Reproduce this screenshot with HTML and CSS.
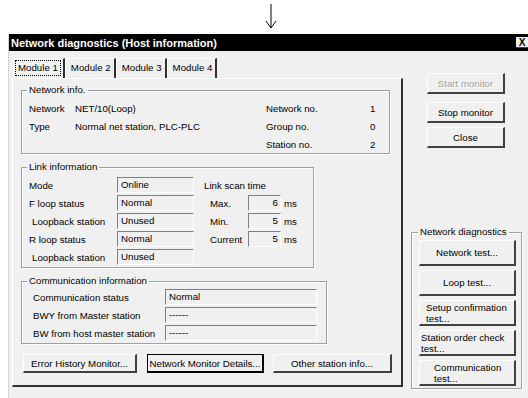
FILE: index.html
```html
<!DOCTYPE html>
<html lang="en">
<head>
  <meta charset="UTF-8">
  <title>Network diagnostics (Host information)</title>
  <link rel="stylesheet" href="styles.css">
</head>
<body>

  <div class="arrow">
    <svg width="14" height="30" viewBox="0 0 14 30">
      <path d="M7 4 V28 M2 21 L7 28 L12 21" fill="none" stroke="#000" stroke-width="1"/>
    </svg>
  </div>

  <div class="window">
    <div class="titlebar">
      <span>Network diagnostics (Host information)</span>
      <span class="close">X</span>
    </div>

    <div class="content">
      <div class="left">
        <div class="tabs">
          <div class="tab active"><span class="focus">Module 1</span></div>
          <div class="tab">Module 2</div>
          <div class="tab">Module 3</div>
          <div class="tab">Module 4</div>
        </div>

        <div class="panel">
          <fieldset class="group net-info">
            <legend>Network info.</legend>
            <div class="net-grid">
              <span>Network</span><span>NET/10(Loop)</span><span>Network no.</span><span class="num">1</span>
              <span>Type</span><span>Normal net station, PLC-PLC</span><span>Group no.</span><span class="num">0</span>
              <span></span><span></span><span>Station no.</span><span class="num">2</span>
            </div>
          </fieldset>

          <fieldset class="group link-info">
            <legend>Link information</legend>
            <div class="link-grid">
              <span>Mode</span><span class="box">Online</span><span class="scan">Link scan time</span>
              <span>F loop status</span><span class="box">Normal</span><span class="sub">Max.</span><span class="box num">6</span><span class="unit">ms</span>
              <span class="indent">Loopback station</span><span class="box">Unused</span><span class="sub">Min.</span><span class="box num">5</span><span class="unit">ms</span>
              <span>R loop status</span><span class="box">Normal</span><span class="sub">Current</span><span class="box num">5</span><span class="unit">ms</span>
              <span class="indent">Loopback station</span><span class="box">Unused</span>
            </div>
          </fieldset>

          <fieldset class="group comm-info">
            <legend>Communication information</legend>
            <div class="comm-grid">
              <span>Communication status</span><span class="box">Normal</span>
              <span>BWY from Master station</span><span class="box">------</span>
              <span>BW from host master station</span><span class="box">------</span>
            </div>
          </fieldset>

          <div class="bottom-buttons">
            <button class="btn btn-error">Error History Monitor...</button>
            <button class="btn btn-details default">Network Monitor Details...</button>
            <button class="btn btn-other">Other station info...</button>
          </div>
        </div>
      </div>

      <div class="right">
        <button class="btn side disabled">Start monitor</button>
        <button class="btn side stop">Stop monitor</button>
        <button class="btn side close-btn">Close</button>

        <fieldset class="group diag">
          <legend>Network diagnostics</legend>
          <button class="btn diag-btn">Network test...</button>
          <button class="btn diag-btn">Loop test...</button>
          <button class="btn diag-btn two-line setup">Setup confirmation<br>test...</button>
          <button class="btn diag-btn two-line order">Station order check<br>test...</button>
          <button class="btn diag-btn two-line comm">Communication<br>test...</button>
        </fieldset>
      </div>
    </div>
  </div>

</body>
</html>
```

FILE: styles.css
```css
* {
  box-sizing: border-box;
}
body {
  margin: 0;
  background-color: #fff;
  font-family: "Liberation Sans", Arial, sans-serif;
  font-size: 9.7px;
  color: #000;
  overflow: hidden;
}
.arrow {
  height: 34px;
  padding-left: 264px;
}
.arrow svg {
  display: block;
}
.window {
  margin-left: 8px;
  width: 528px;
  height: 364px;
  background-color: #f0f0f0;
  border-left: 1px solid #d4d4d4;
}
.titlebar {
  height: 17px;
  background-color: #000;
  color: #fff;
  font-weight: bold;
  font-size: 11px;
  display: flex;
  align-items: center;
  justify-content: space-between;
  padding-left: 2px;
}
.close {
  width: 13px;
  height: 11px;
  margin-right: 7px;
  background-color: #f0f0f0;
  color: #000;
  font-size: 10px;
  line-height: 11px;
  text-align: center;
  border-right: 1px solid #404040;
  border-bottom: 1px solid #404040;
}
.content {
  display: flex;
  padding-top: 7px;
}
.left {
  margin-left: 3px;
  width: 391px;
}
.tabs {
  display: flex;
  height: 20px;
  padding-left: 1px;
}
.tab {
  padding: 3px 3px 0 5px;
  border-top: 1px solid #fff;
  border-left: 1px solid #fff;
  border-right: 2px solid #303030;
  white-space: nowrap;
}
.tab.active {
  padding: 1px 2px 0 1px;
}
.focus {
  display: inline-block;
  padding: 1px 2px 2px 2px;
  border: 1px dotted #000;
}
.panel {
  border-left: 1px solid #fff;
  border-top: 1px solid #fff;
  border-right: 2px solid #303030;
  border-bottom: 2px solid #303030;
  padding: 5px 0 12px 8px;
}
.group {
  margin: 0;
  padding: 0 7px;
  min-width: 0;
  border: 1px solid #a0a0a0;
  box-shadow: inset 1px 1px #fff, 1px 1px #fff;
}
.group legend {
  padding: 0 2px;
  margin-left: -2px;
  line-height: 12px;
}
.net-info {
  width: 369px;
  padding-top: 3px;
}
.net-grid {
  display: grid;
  grid-template-columns: 46px 191px 104px auto;
  grid-auto-rows: 18px;
  align-items: center;
}
.link-info {
  width: 293px;
  margin-top: 7px;
  padding-top: 4px;
  padding-bottom: 2px;
}
.link-grid {
  display: grid;
  grid-template-columns: 88px 77px 10px 44px 33px auto;
  grid-auto-rows: 16px;
  row-gap: 2px;
  align-items: center;
}
.link-grid .box {
  grid-column: 2;
}
.link-grid .sub {
  grid-column: 4;
  padding-left: 6px;
}
.link-grid .box.num {
  grid-column: 5;
}
.link-grid .scan {
  grid-column: 4 / 7;
}
.unit {
  padding-left: 3px;
}
.indent {
  padding-left: 3px;
}
.box {
  height: 16px;
  line-height: 14px;
  padding-left: 3px;
  border-top: 1px solid #808080;
  border-left: 1px solid #808080;
  border-right: 1px solid #fff;
  border-bottom: 1px solid #fff;
  white-space: nowrap;
}
.box.num {
  text-align: right;
  padding-right: 2px;
}
.num {
  text-align: left;
}
.comm-info {
  width: 306px;
  margin-top: 7px;
  padding-top: 2px;
  padding-bottom: 2px;
}
.comm-grid {
  display: grid;
  grid-template-columns: 136px 152px;
  grid-auto-rows: 16px;
  row-gap: 2px;
  align-items: center;
}
.comm-grid > span:nth-child(odd) {
  padding-left: 4px;
}
.bottom-buttons {
  display: flex;
  margin-top: 10px;
  margin-left: 2px;
}
.btn {
  font-family: inherit;
  font-size: inherit;
  color: #000;
  background-color: #f0f0f0;
  padding: 0;
  border-top: 1px solid #fff;
  border-left: 1px solid #fff;
  border-right: 2px solid #404040;
  border-bottom: 2px solid #404040;
  border-radius: 0;
  height: 19px;
}
.btn-error {
  width: 114px;
}
.btn-details {
  width: 117px;
  margin-left: 10px;
}
.btn.default {
  border: 1px solid #000;
  border-right: 2px solid #000;
  border-bottom: 2px solid #000;
}
.btn-other {
  width: 119px;
  margin-left: 9px;
}
.right {
  margin-left: 8px;
  padding-top: 15px;
  display: flex;
  flex-direction: column;
  align-items: flex-start;
}
.side {
  width: 78px;
  height: 21px;
  margin-left: 16px;
}
.side.disabled {
  color: #a0a0a0;
  text-shadow: 1px 1px #fff;
}
.side.stop {
  margin-top: 8px;
}
.side.close-btn {
  margin-top: 4px;
}
.diag {
  width: 111px;
  margin-top: 78px;
  padding: 2px 4px 2px 7px;
  display: flex;
  flex-direction: column;
}
.diag legend {
  margin-left: -1px;
  padding: 0 2px;
}
.diag-btn {
  width: 97px;
  height: 26px;
  margin-bottom: 4px;
}
.diag-btn:last-child {
  margin-bottom: 0;
}
.two-line {
  text-align: left;
  line-height: 11px;
}
.setup {
  padding-left: 6px;
}
.order {
  padding-left: 1px;
}
.comm {
  padding-left: 14px;
}
```
